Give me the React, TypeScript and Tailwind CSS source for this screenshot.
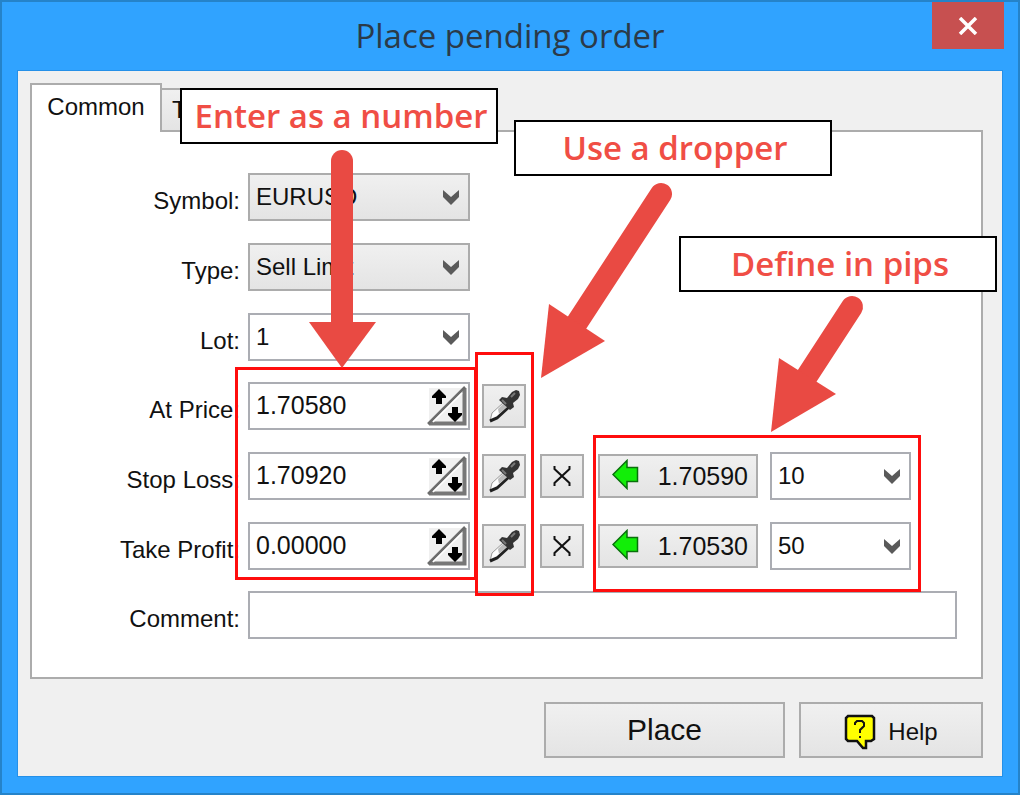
import { useState } from 'react'
import type { ReactNode } from 'react'

const FACE = 'border-2 border-[#acacac] bg-linear-to-b from-[#f0f0f0] to-[#e4e4e4]'
const FIELD = 'border-2 border-[#abadb3] bg-white'

const CALLOUTS = [
  { text: 'Enter as a number', place: 'left-[178px] top-[86px]' },
  { text: 'Use a dropper',     place: 'left-[512px] top-[118px]' },
  { text: 'Define in pips',    place: 'left-[677px] top-[234px]' },
]

const FRAMES = [
  'left-[233px] top-[365px] h-[213px] w-[242px]',
  'left-[473px] top-[350px] h-[244px] w-[59px]',
  'left-[591px] top-[433px] h-[157px] w-[328px]',
]

function Chevron() {
  return (
    <svg className="pointer-events-none absolute right-2 top-1/2 -mt-[7px] h-4 w-[18px]" viewBox="0 0 18 16">
      <path d="M1 0 L9 7 L17 0 V7 L9 15 L1 7 Z" fill="#5a5a5a" />
    </svg>
  )
}

function SpinIcon() {
  return (
    <svg className="h-10 w-10" viewBox="0 0 40 40">
      <path d="M2 2 H38 V38 H2 Z" fill="#f0f0f0" />
      <path d="M37.500 2 V37.500 H2" fill="none" stroke="#777" strokeWidth="4" />
      <path d="M1 38 L38 1" fill="none" stroke="#6b6b6b" strokeWidth="2.500" />
      <path d="M6 36 L35 7" fill="none" stroke="#fff" strokeWidth="1.500" />
      <path d="M12 3 L19 10 V12 H15 V18 H9 V12 H5 V10 Z" fill="#000" />
      <path d="M28 36 L35 29 V27 H31 V21 H25 V27 H21 V29 Z" fill="#000" />
    </svg>
  )
}

function DropperIcon() {
  return (
    <svg className="h-[34px] w-[34px]" viewBox="0 0 34 34">
      <path d="M3 32 L5 24 L17 13 L22 18 L11 28 Z" fill="#fff" stroke="#999" strokeWidth="1" />
      <path d="M3 32 L10 29 L22 18" fill="none" stroke="#222" strokeWidth="3" />
      <path d="M11 20 L17 14 L20 18 L12 25 Z" fill="#bbb" />
      <path d="M12 11 L15 8 L20 9 L25 3 L29 1 L32 2 L33 6 L31 10 L26 14 L27 18 L23 21 Z" fill="#333" />
      <path d="M15 11 L19 15 M24 8 L28 4" stroke="#777" strokeWidth="2" />
    </svg>
  )
}

function GreenArrow() {
  return (
    <svg className="-mt-1 h-[31px] w-[27px]" viewBox="0 0 27 31">
      <path d="M1 15.500 L15 1.500 V8.500 H25.500 V22.500 H15 V29.500 Z" fill="#12ee08" stroke="#08700b" strokeWidth="1.500" />
    </svg>
  )
}

function HelpIcon() {
  return (
    <svg className="h-9 w-8" viewBox="0 0 32 36">
      <path d="M4 2 H28 L30 4 V25 L27 27 H22 V34 L19 34 L13 27 H4 L2 25 V4 Z" fill="#ff0" stroke="#111" strokeWidth="2.500" />
      <path d="M11 11 V9 L13 7 H18 L20 9 V12 L16 16 V19" fill="none" stroke="#111" strokeWidth="2" />
      <path d="M15 22 H17 V24 H15 Z" fill="#111" />
    </svg>
  )
}

function Row({ id, label, children }: { id: string; label: string; children: ReactNode }) {
  return (
    <div className="flex h-12 items-center">
      <label htmlFor={id} className="mr-2 w-52 shrink-0 whitespace-nowrap pt-2 text-right text-[24px]">{label}</label>
      {children}
    </div>
  )
}

function Combo({ id, label, options, className }: { id: string; label?: string; options: string[]; className: string }) {
  return (
    <div className={`relative h-12 shrink-0 ${className}`}>
      <select id={id} aria-label={label} className="h-full w-full appearance-none pl-[6px] text-[24px] outline-none">
        {options.map(o => <option key={o}>{o}</option>)}
      </select>
      <Chevron />
    </div>
  )
}

function PriceField({ id, initial }: { id: string; initial: string }) {
  const [value, setValue] = useState(initial)

  const step = () => setValue(v => (Number(v) + 0.0001).toFixed(5))

  return (
    <>
      <div className={`flex h-12 w-[222px] shrink-0 items-center pr-px ${FIELD}`}>
        <input
          id={id}
          value={value}
          onChange={e => setValue(e.target.value)}
          className="h-full min-w-0 flex-1 bg-transparent pb-[2px] pl-[6px] outline-none"
        />
        <button type="button" aria-label="Change value" onClick={step}>
          <SpinIcon />
        </button>
      </div>
      <button type="button" aria-label="Pick from chart" className={`ml-3 flex h-11 w-11 shrink-0 items-center justify-center ${FACE}`}>
        <DropperIcon />
      </button>
    </>
  )
}

function PipsControls({ id, price, pips }: { id: string; price: string; pips: string }) {
  return (
    <>
      <button type="button" aria-label="Clear" className={`ml-[14px] flex h-11 w-11 shrink-0 items-center justify-center ${FACE}`}>
        <svg className="h-[22px] w-[18px]" viewBox="0 0 18 22">
          <path d="M1.500 1 V4 L16.500 18 V21 M16.500 1 V4 L1.500 18 V21" fill="none" stroke="#111" strokeWidth="2" />
        </svg>
      </button>
      <button type="button" className={`ml-[14px] flex h-11 w-40 shrink-0 items-center justify-between pl-3 pr-2 ${FACE}`}>
        <GreenArrow />
        {price}
      </button>
      <Combo id={id} label="Pips" options={[pips]} className={`ml-3 w-[141px] ${FIELD}`} />
    </>
  )
}

export default function App() {
  return (
    <div className="relative flex min-h-screen flex-col border-2 border-[#2583c9] bg-[#30a3ff] font-['Liberation_Sans',sans-serif] text-[25px] leading-8 text-[#111]">
      {/* Title bar */}
      <header className="grid h-[68px] grid-cols-[1fr_auto_1fr] items-center">
        <span />
        <h1 className="font-['Open_Sans',sans-serif] text-[33px] text-[#2b3a48]">Place pending order</h1>
        <button type="button" aria-label="Close" className="mr-[14px] flex h-[47px] w-[72px] items-center justify-center self-start justify-self-end bg-[#c75050]">
          <svg className="h-[18px] w-5" viewBox="0 0 20 18">
            <path d="M2 1 L18 17 M18 1 L2 17" stroke="#fff" strokeWidth="3.500" />
          </svg>
        </button>
      </header>

      <main className="mx-[15px] mb-4 flex flex-1 flex-col border border-[#2590e8] bg-[#f0f0f0] pb-[18px] pl-3 pr-[19px] pt-3">
        {/* Tabs */}
        <div role="tablist" className="flex h-[47px] items-end">
          <button type="button" role="tab" aria-selected="true" className="relative -mb-[2px] h-[49px] w-[132px] border-2 border-b-0 border-[#acacac] bg-white pb-1 text-[24px]">
            Common
          </button>
          <button type="button" role="tab" aria-selected="false" className={`-mb-[2px] -ml-[2px] h-11 w-28 pl-[10px] text-left text-[24px] ${FACE}`}>
            T
          </button>
        </div>

        <form className="flex flex-1 flex-col gap-[21px] border-2 border-[#acacac] bg-white pb-[38px] pr-6 pt-[41px]">
          <div className="flex flex-col gap-[22px]">
            <Row id="symbol" label="Symbol:">
              <Combo id="symbol" options={['EURUSD']} className={`w-[222px] ${FACE}`} />
            </Row>
            <Row id="type" label="Type:">
              <Combo id="type" options={['Sell Limit']} className={`w-[222px] ${FACE}`} />
            </Row>
            <Row id="lot" label="Lot:">
              <Combo id="lot" options={['1']} className={`w-[222px] ${FIELD}`} />
            </Row>
          </div>

          <div className="flex flex-col gap-[22px]">
            <Row id="price" label="At Price:">
              <PriceField id="price" initial="1.70580" />
            </Row>
            <Row id="stop-loss" label="Stop Loss:">
              <PriceField id="stop-loss" initial="1.70920" />
              <PipsControls id="stop-pips" price="1.70590" pips="10" />
            </Row>
            <Row id="take-profit" label="Take Profit:">
              <PriceField id="take-profit" initial="0.00000" />
              <PipsControls id="profit-pips" price="1.70530" pips="50" />
            </Row>
          </div>

          <Row id="comment" label="Comment:">
            <input id="comment" className={`h-full min-w-0 flex-1 px-[6px] outline-none ${FIELD}`} />
          </Row>
        </form>

        <footer className="flex justify-end gap-[14px] pt-[23px]">
          <button type="button" className={`h-14 w-[241px] text-[30px] ${FACE}`}>Place</button>
          <button type="button" className={`flex h-14 w-[184px] items-center justify-center gap-3 pt-1 text-[24px] ${FACE}`}>
            <HelpIcon />
            Help
          </button>
        </footer>
      </main>

      {/* Notes laid over the dialog */}
      {FRAMES.map(frame => (
        <div key={frame} className={`pointer-events-none absolute border-3 border-[#ff0d0d] ${frame}`} />
      ))}

      <svg className="pointer-events-none absolute -left-[2px] -top-[2px] h-[795px] w-[1020px]" viewBox="0 0 1020 795">
        <g stroke="#e94a43" strokeWidth="22" strokeLinecap="round">
          <path d="M342 161 V335" />
          <path d="M661 194 L567 338" />
          <path d="M852 307 L796 393" />
        </g>
        <g fill="#e94a43">
          <path d="M309 322 H376 L342 368 Z" />
          <path d="M549 304 L605 341 L541 378 Z" />
          <path d="M779 358 L836 394 L771 432 Z" />
        </g>
      </svg>

      {CALLOUTS.map(({ text, place }) => (
        <p
          key={text}
          className={`absolute flex h-14 w-[318px] items-center justify-center whitespace-nowrap border-2 border-black bg-white pl-1 font-['Open_Sans',sans-serif] text-[33px] font-semibold text-[#f04e45] ${place}`}
        >
          {text}
        </p>
      ))}
    </div>
  )
}
